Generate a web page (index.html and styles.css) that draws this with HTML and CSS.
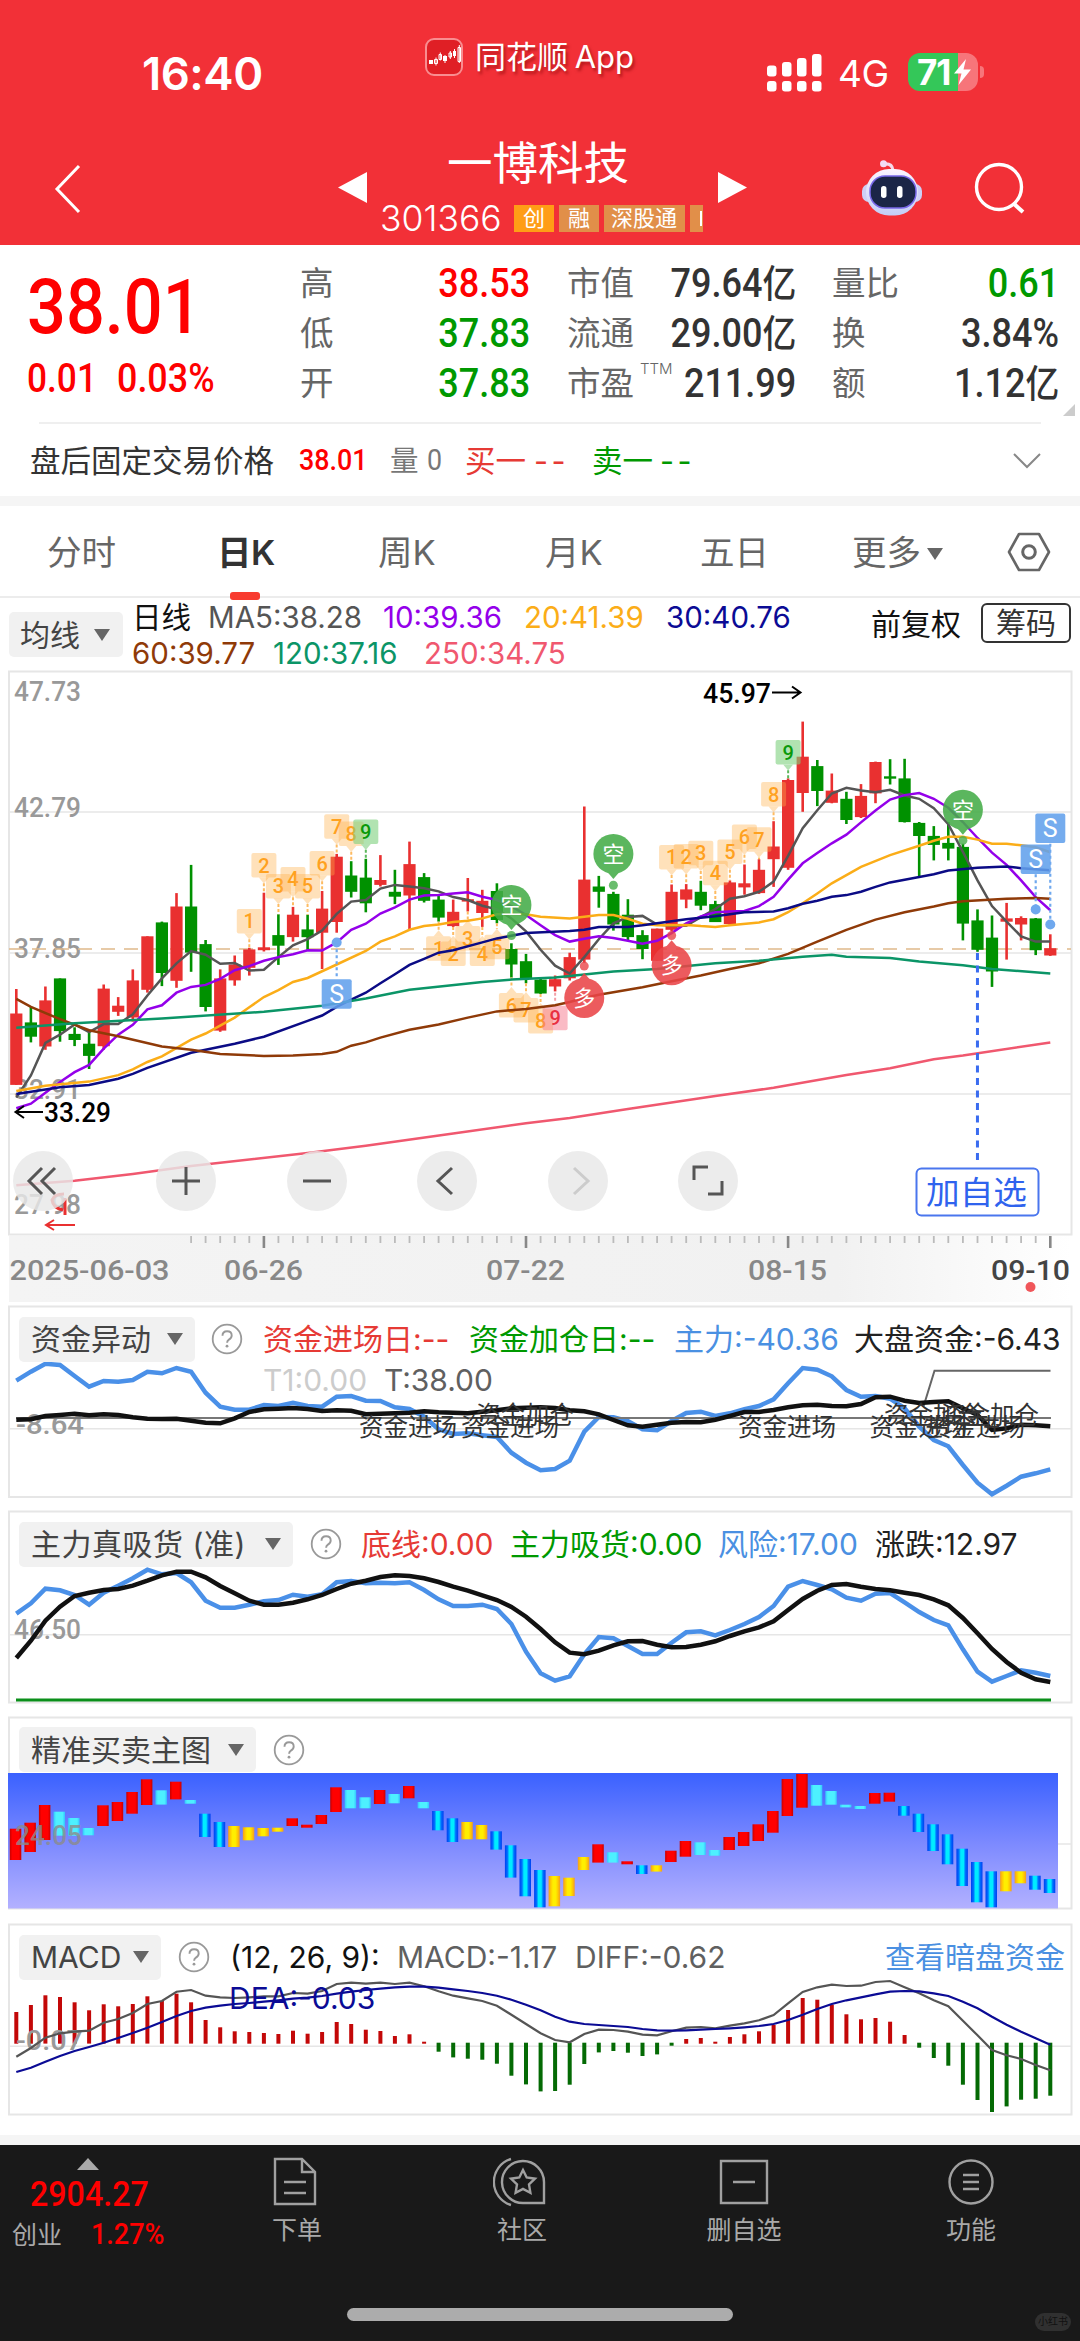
FILE: index.html
```html
<!DOCTYPE html>
<html lang="zh-CN">
<head>
<meta charset="utf-8">
<title>一博科技 301366</title>
<link rel="stylesheet" href="styles.css">
</head>
<body>
<header class="top">
  <div class="status">
    <time class="clock">16:40</time>
    <div class="brand">
      <svg width="38" height="38" viewBox="0 0 38 38"><rect x="1" y="1" width="36" height="36" rx="8" fill="#e01f25" stroke="#f98d90" stroke-width="2"/><path d="M4 22h4v4H4zM18 18h4v5h-4zM28 13h3v5h-3z" fill="#fff"/><path d="M9.500 21.500h3v4h-3zM14 16.500h2.500v5H14zM24 15h2.500v4H24zM33 9.500h2.500v14H33zM11 19.500v8M15.300 14.500v8M20 17v8M25.300 13v8M29.500 11v9M34.300 7v18" fill="none" stroke="#fff" stroke-width="1"/></svg>
      <span>同花顺 App</span>
    </div>
    <div class="radio">
      <svg width="56" height="40" viewBox="0 0 56 40" fill="#fff"><rect x="0" y="12.500" width="9.500" height="11" rx="3"/><rect x="15" y="9" width="9.500" height="14.500" rx="3"/><rect x="30" y="5" width="9.500" height="18.500" rx="3"/><rect x="45" y="1" width="9.500" height="22.500" rx="3"/><rect x="0" y="28" width="9.500" height="10.500" rx="3"/><rect x="15" y="28" width="9.500" height="10.500" rx="3"/><rect x="30" y="28" width="9.500" height="10.500" rx="3"/><rect x="45" y="28" width="9.500" height="10.500" rx="3"/></svg>
      <span class="net">4G</span>
      <div class="battery"><b>71</b><svg width="18" height="26" viewBox="0 0 18 26"><path d="M12 0 0 14.500h7.500L4.500 26 17 10.500H9.500z" fill="#fff"/></svg></div>
      <i class="nub"></i>
    </div>
  </div>
  <nav class="titlebar">
    <svg class="back" width="28" height="50" viewBox="0 0 28 50"><path d="M25 2 3 25l22 23" fill="none" stroke="#fff" stroke-width="3"/></svg>
    <svg class="tri" width="29" height="31" viewBox="0 0 29 31"><path d="M29 0v31L0 15.500z" fill="#fff"/></svg>
    <div class="name">
      <h1>一博科技</h1>
      <div class="code"><span class="num">301366</span><em class="hot">创</em><em>融</em><em>深股通</em><em class="cut"><i></i></em></div>
    </div>
    <svg class="tri" width="29" height="31" viewBox="0 0 29 31"><path d="M0 0v31l29-15.500z" fill="#fff"/></svg>
    <svg class="robot" width="62" height="56" viewBox="0 0 62 56"><defs><linearGradient id="rb" x1="0" y1="0" x2="0" y2="1"><stop offset="0" stop-color="#fbf4ff"/><stop offset="1" stop-color="#c3cdf6"/></linearGradient></defs><path d="M23 4q8-1 9 6" fill="none" stroke="#f6d9ea" stroke-width="3"/><circle cx="22.500" cy="3.800" r="3.500" fill="#f3dcf4"/><rect x="1" y="24" width="60" height="18" rx="7" fill="#cdcff5"/><rect x="5" y="9" width="52" height="46.500" rx="23" fill="url(#rb)"/><rect x="9" y="16" width="46" height="32" rx="15" fill="#1b2547" stroke="#7867e8" stroke-width="1.500"/><rect x="20" y="26" width="5.500" height="12" rx="2.700" fill="#fff"/><rect x="36" y="26" width="5.500" height="12" rx="2.700" fill="#fff"/></svg>
    <svg class="search" width="52" height="52" viewBox="0 0 52 52" fill="none" stroke="#fff" stroke-width="3.400"><circle cx="25" cy="25" r="22.500"/><path d="m39 41 10 9" stroke-width="4"/></svg>
  </nav>
</header>

<section class="quote">
  <div class="last"><strong class="din">38.01</strong><p><span class="din">0.01</span><span class="din">0.03%</span></p></div>
  <dl class="stats">
    <dt>高</dt><dd class="up">38.53</dd><dt>市值</dt><dd>79.64<small>亿</small></dd><dt>量比</dt><dd class="down">0.61</dd>
    <dt>低</dt><dd class="down">37.83</dd><dt>流通</dt><dd>29.00<small>亿</small></dd><dt>换</dt><dd>3.84%</dd>
    <dt>开</dt><dd class="down">37.83</dd><dt>市盈<sup>TTM</sup></dt><dd>211.99</dd><dt>额</dt><dd>1.12<small>亿</small></dd>
  </dl>
  <i class="corner"></i>
</section>
<section class="after">
  <span class="k">盘后固定交易价格</span><span class="din up">38.01</span><span class="g">量</span><span class="din g">0</span><span class="buy">买一</span><span class="buy dash">--</span><span class="down">卖一</span><span class="down dash">--</span>
  <svg width="30" height="18" viewBox="0 0 30 18"><path d="m2 2 13 13L28 2" fill="none" stroke="#888" stroke-width="2"/></svg>
</section>

<nav class="tabs">
  <span>分时</span><span class="on">日K</span><span>周K</span><span>月K</span><span>五日</span><span class="more">更多<i></i></span>
  <svg width="44" height="40" viewBox="0 0 44 40" fill="none" stroke="#666" stroke-width="2.600"><path d="M12 2h20l10 18-10 18H12L2 20z" stroke-linejoin="round"/><circle cx="22" cy="20" r="6.300" stroke-width="3"/></svg>
</nav>

<section class="malegend">
  <button class="pick">均线<i></i></button>
  <div class="malist">
    <p><span class="c0">日线</span><span class="c1">MA5:38.28</span><span class="c2">10:39.36</span><span class="c3">20:41.39</span><span class="c4">30:40.76</span></p>
    <p><span class="c5">60:39.77</span><span class="c6">120:37.16</span><span class="c7">250:34.75</span></p>
  </div>
  <span class="adj">前复权</span><button class="chips">筹码</button>
</section>

<section class="kchart">
  <svg id="k" class="plot" viewBox="0 671 1080 635"></svg>
  <div class="tools">
    <button><svg viewBox="0 0 60 60"><path d="M29 17 16 30l13 13M42 17 29 30l13 13"/></svg></button>
    <button><svg viewBox="0 0 60 60"><path d="M16 30h28M30 16v28"/></svg></button>
    <button><svg viewBox="0 0 60 60"><path d="M16 30h28"/></svg></button>
    <button><svg viewBox="0 0 60 60"><path d="M35 17 21 30l14 13"/></svg></button>
    <button class="off"><svg viewBox="0 0 60 60"><path d="m26 17 14 13-14 13"/></svg></button>
    <button><svg viewBox="0 0 60 60"><path d="M16 29V16h14M44 30v13H30"/></svg></button>
  </div>
</section>

<section class="panel p1">
  <div class="head"><button class="pick">资金异动<i></i></button><svg class="q"><use href="#help"/></svg>
    <span class="buy">资金进场日:--</span><span class="down">资金加仓日:--</span><span class="blue">主力:-40.36</span><span class="blk">大盘资金:-6.43</span></div>
  <div class="sub"><span class="pale">T1:0.00</span><span class="gray">T:38.00</span></div>
  <svg id="f" class="plot" viewBox="0 1306 1080 192"></svg>
</section>
<section class="panel p2">
  <div class="head"><button class="pick">主力真吸货 (准)<i></i></button><svg class="q"><use href="#help"/></svg>
    <span class="buy">底线:0.00</span><span class="down">主力吸货:0.00</span><span class="blue">风险:17.00</span><span class="blk">涨跌:12.97</span></div>
  <svg id="r" class="plot" viewBox="0 1511 1080 192"></svg>
</section>
<section class="panel p3">
  <div class="head"><button class="pick">精准买卖主图<i></i></button><svg class="q"><use href="#help"/></svg></div>
  <svg id="b" class="plot" viewBox="0 1717 1080 192"></svg>
</section>
<section class="panel p4">
  <div class="head"><button class="pick">MACD<i></i></button><svg class="q"><use href="#help"/></svg>
    <span class="ink">(12, 26, 9):</span><span class="gray">MACD:-1.17</span><span class="gray">DIFF:-0.62</span><span class="blue link">查看暗盘资金</span></div>
  <div class="sub"><span class="navy">DEA:-0.03</span></div>
  <svg id="m" class="plot" viewBox="0 1924 1080 192"></svg>
</section>

<footer class="bar">
  <div class="index"><i></i><b class="din">2904.27</b><p><span>创业</span><b class="din">1.27%</b></p></div>
  <div class="item"><svg width="48" height="50" viewBox="0 0 48 50"><path d="M4 2h27l13 13v32H4zM31 2v13h13M13 25h22M13 36h22"/></svg><span>下单</span></div>
  <div class="item"><svg width="54" height="50" viewBox="0 0 54 50"><path d="M51 46H31A21 21 0 1 1 51 25z"/><path d="M18 2a24 24 0 0 0 0 46M30 13l3.700 7.500 8.300 1.200-6 5.800 1.400 8.300-7.400-3.900-7.400 3.900 1.400-8.300-6-5.800 8.300-1.200z"/></svg><span>社区</span></div>
  <div class="item"><svg width="50" height="50" viewBox="0 0 50 50"><path d="M2 4h46v42H2zM14 25h22"/></svg><span>删自选</span></div>
  <div class="item"><svg width="50" height="50" viewBox="0 0 50 50"><circle cx="25" cy="25" r="21.500"/><path d="M17 18h16M17 25h16M17 32h16"/></svg><span>功能</span></div>
  <i class="home"></i><span class="wm">小红书</span>
</footer>

<svg width="0" height="0" class="defs"><symbol id="help" viewBox="0 0 32 32"><circle cx="16" cy="16" r="14.300" fill="none" stroke="#999" stroke-width="1.800"/><path d="M11.500 12.800q0-4.600 4.600-4.600t4.600 4.200q0 2.500-2.800 4.200-1.800 1.100-1.800 3.200" fill="none" stroke="#999" stroke-width="1.900"/><circle cx="16" cy="23.200" r="1.400" fill="#999"/></symbol></svg>
<script src="charts.js"></script>
</body>
</html>
```
FILE: styles.css
```css
*{box-sizing:border-box}
body{margin:0;width:1080px;background:#fff;color:#333;font-family:Inter,"Noto Sans CJK SC",sans-serif;font-size:30px;line-height:1;overflow-x:hidden}
button{font:inherit;color:inherit;border:0;padding:0;margin:0}
h1,p,dl,dd,dt{margin:0;font-weight:400}
i,em{font-style:normal}
span{white-space:nowrap}
.defs{position:absolute}
.din,.stats dd{font-family:Roboto,"Noto Sans CJK SC",sans-serif;font-weight:500}
.up{color:#fe0000}
.down{color:#009900}
.buy{color:#e63a35}
.blue{color:#4a90e2}
.blk{color:#222}
.ink{color:#111}
.gray{color:#606060}
.pale{color:#ccc}
.navy{color:#0b0b95}

.top{height:245px;background:#f23037;color:#fff}
.status{height:120px;display:grid;grid-template-columns:142px 283px 342px 1fr;grid-template-areas:". clock brand radio"}
.clock{grid-area:clock;font-size:45.500px;font-weight:600;letter-spacing:-.5px;padding-top:51px}
.brand{grid-area:brand;display:flex;gap:12px;padding-top:38px;font-size:31px;text-shadow:2px 3px 3px rgba(120,0,0,.5)}
.brand span{line-height:38px;word-spacing:-2px}
.radio{grid-area:radio;display:flex;padding-top:53px}
.net{font-size:37px;line-height:42px;margin-left:15px;width:70px;letter-spacing:-.5px}
.battery{width:70px;height:38px;border-radius:12px;background:linear-gradient(90deg,#34c759 50px,#f7757a 50px);display:flex;align-items:center;padding-left:9px;font-size:35px}
.battery b{width:37px;letter-spacing:-1px}
.nub{width:4px;height:12px;border-radius:0 6px 6px 0;background:#f7757a;margin:13px 0 0 2px}
.titlebar{display:grid;grid-template-columns:284px 42px 338px 143px 113px 1fr;padding-left:54px;height:125px}
.back{margin-top:44px}
.tri{margin-top:52px}
.name{padding-top:19px}
.name h1{font-size:45.500px;line-height:50px;padding-left:67px}
.code{display:flex;gap:5px;margin-top:14px;width:323px;overflow:hidden;height:32px}
.code .num{font-size:35.500px;font-weight:300;line-height:32px;width:130px}
.code em{height:27px;margin-top:2px;background:#e18f49;font-size:22px;line-height:26px;padding:0 9px;flex:none;width:40px}
.code em.hot{background:#ff9d16}
.code em:nth-child(4){width:81px;padding:0 7px}
.code em.cut{width:13px;padding:0}
.cut i{display:block;width:2px;height:15px;background:#fff;margin:6px 0 0 10px}
.robot{margin-top:40px}
.search{margin-top:42px}

.quote{height:177px;display:grid;grid-template-columns:300px 760px 1fr;position:relative}
.last{padding:24px 0 0 27px;color:#fe0000}
.last strong{display:block;font-size:76px;line-height:76px;transform:scaleX(.9);transform-origin:0 50%;white-space:nowrap}
.last p{display:grid;grid-template-columns:90px 1fr;margin-top:13px;font-size:41px;line-height:40px}
.last p span{justify-self:start;transform:scaleX(.875);transform-origin:0 50%}
.last p span:first-child{transform:scaleX(.86)}
.stats{display:grid;grid-template-columns:100px 130px 37px 97px 132px 36px 98px 129px;grid-auto-rows:50px;line-height:50px;padding-top:13px}
.stats dt{font-size:33.500px;color:#666;white-space:nowrap;position:relative}
.stats dt:nth-of-type(3n+2){grid-column:4}
.stats dt:nth-of-type(3n){grid-column:7}
.stats dd{font-size:40.500px;justify-self:end;transform:scaleX(.89);transform-origin:100% 50%;white-space:nowrap}
.stats small{font-size:38px}
.stats sup{position:absolute;left:73px;top:-14px;font-size:15px;font-weight:300}
.corner{position:absolute;right:5px;bottom:6px;border-left:12px solid transparent;border-bottom:12px solid #ccc}
.after{height:74px;border-top:2px solid #efefef;display:grid;grid-template-columns:269px 91px 37px 38px 69px 58px 68px 352px 30px;padding:2px 0 0 30px;align-items:center;font-size:30.500px;border-image:linear-gradient(90deg,transparent 40px,#efefef 40px,#efefef 1040px,transparent 1040px) 1}
.after .din{justify-self:start;transform:scaleX(.91);transform-origin:0 50%;font-size:29.500px}
.after .din.g{font-weight:400}
.after .dash{letter-spacing:3.500px}
.g{color:#777;font-size:28.500px}

.tabs{height:102px;border-top:10px solid #f5f5f5;border-bottom:2px solid #ececec;display:grid;grid-template-columns:47px 170px 161px 167px 155px 152px 155px 1fr;color:#666;font-size:34.500px;line-height:94px}
.tabs span:first-child{grid-column:2}
.tabs .on{color:#333;font-weight:600;position:relative;letter-spacing:-.5px}
.tabs .on::after{content:"";position:absolute;left:13px;bottom:0;width:30px;height:8px;border-radius:3px;background:#f83b2f}
.tabs svg{margin-top:26px}
.more i,.pick i{display:inline-block;border:8px solid transparent;border-top:12px solid #666;border-bottom:0}
.more i{margin:0 0 5px 6px}

.malegend{height:73px;display:grid;grid-template-columns:9px 123px 739px 110px 90px;font-size:30px}
.malegend .pick{grid-column:2}
.pick{display:flex;align-items:center;justify-content:space-between;background:#f1f1f1;border-radius:5px;color:#444;text-align:left;white-space:nowrap}
.malegend .pick{width:114px;height:45px;margin-top:14px;padding:1px 13px 0 11px;font-size:30px}
.malist p{display:grid;line-height:36px;font-size:29.500px;letter-spacing:0}
.malist p:first-child{grid-template-columns:76px 175px 141px 142px 1fr}
.malist p:last-child{grid-template-columns:141px 151px 1fr}
.malist{padding-top:1px}
.c0{color:#111}.c1{color:#555}.c2{color:#9400ea}.c3{color:#fbad18}.c4{color:#0b0b95}.c5{color:#8f3a08}.c6{color:#0b9567}.c7{color:#f0586f}
.adj{color:#111;line-height:52px}
.chips{height:40px;margin-top:5px;border:2px solid #333;border-radius:6px;background:#fff;color:#333;line-height:35px}

.kchart{height:635px;position:relative}
.plot{position:absolute;left:0;top:0;width:1080px;height:100%;overflow:visible;display:block}
.tools{position:absolute;left:13px;top:480px;display:flex;gap:70.500px}
.tools button{width:60px;height:60px;border-radius:50%;background:rgba(232,232,232,.82)}
.tools button:first-child{margin-right:12.500px}
.tools svg{width:60px;height:60px;display:block;fill:none;stroke:#555;stroke-width:3}
.tools .off svg{stroke:#ccc}

.panel{height:192px;margin-bottom:13px;position:relative}
.p2{margin-bottom:14px}.p3{margin-bottom:15px}.p4{margin-bottom:19px}
.panel .head,.panel .sub{position:relative;z-index:1}
.head{display:grid;padding:10px 0 0 19px;align-items:center;line-height:46px}
.pick{height:45px;padding:0 12px 0 12px}
.panel .pick{width:100%}
.q{width:32px;height:32px}
.p1 .head{grid-template-columns:176px 16px 52px 206px 205px 180px 1fr}
.p1 .q,.p2 .q,.p3 .q,.p4 .q{grid-column:3}
.p2 .head{grid-template-columns:274px 17px 51px 149px 208px 157px 1fr}
.p2 .pick{letter-spacing:.5px}
.p3 .head{grid-template-columns:237px 17px 52px 1fr}
.p4 .head{grid-template-columns:142px 17px 52px 167px 178px 310px 1fr}
.sub{display:grid;grid-template-columns:263px 121px 1fr;height:40px;line-height:38px;margin-top:-1px}
.sub span:first-child{grid-column:2}
.p4 .sub{grid-template-columns:229px 1fr}

.bar{height:206px;border-top:10px solid #f5f5f5;background:#191919;color:#a9a9a9;display:grid;grid-template-columns:176px 242px 208px 236px 218px;position:relative;font-size:25px}
.index{padding-top:13px;color:#fe0000}
.index>i{display:block;width:0;margin-left:77px;border:11px solid transparent;border-bottom:12px solid #a9a9a9;border-top:0}
.index>.din{display:block;font-size:35px;line-height:35px;margin:7px 0 0 30px;transform:scaleX(.92);transform-origin:0 50%}
.index p{display:grid;grid-template-columns:79px 1fr;padding-left:12px;line-height:40px;margin-top:2px}
.index p span{color:#a9a9a9;line-height:43px}
.index p .din{font-size:30px;transform:scaleX(.9);transform-origin:0 50%;font-weight:500}
.index>.din{font-weight:500}
.item{display:flex;flex-direction:column;align-items:center;padding-top:12px;gap:11px}
.item svg{fill:none;stroke:#a0a0a0;stroke-width:2.400}
.item:nth-child(2) svg,.item:nth-child(3) svg{margin-right:4px}
.home{position:absolute;left:347px;top:163px;width:386px;height:13px;border-radius:7px;background:#acacac}
.wm{position:absolute;right:9px;bottom:10px;width:36px;height:18px;border-radius:9px;background:#303030;color:#111;font-size:10px;line-height:17px;text-align:center}
svg text{font-family:Roboto,"Noto Sans CJK SC",sans-serif}
```
FILE: charts.js
```js
const STEP = 14.563, X0 = 16.3;
const X = i => X0 + STEP * i;
const n1 = v => Math.round(v * 10) / 10;
const put = (id, s) => document.getElementById(id).insertAdjacentHTML('beforeend', s);
const rect = (x, y, w, h, f, more = '') => `<rect x="${n1(x)}" y="${n1(y)}" width="${n1(w)}" height="${n1(h)}" fill="${f}" ${more}/>`;
const hline = (y, x1 = 9, x2 = 1071, c = '#e6e6e6', w = 1.5) => `<path d="M${x1} ${y}H${x2}" stroke="${c}" stroke-width="${w}"/>`;
const text = (x, y, s, size, fill, w, more = '') => `<text x="${x}" y="${y}" font-size="${size}" fill="${fill}" ${w ? `textLength="${w}" lengthAdjust="spacingAndGlyphs"` : ''} ${more}>${s}</text>`;
const frame = (y, h) => rect(9, y, 1062.500, h, 'none', 'stroke="#e6e6e6" stroke-width="2"');
// pairs: "index:value index:value ..."
const line = (src, Y, color, w) => {
  const pts = src.trim().split(/\s+/).map(p => p.split(':').map(Number)).map(([i, v]) => n1(X(i)) + ',' + n1(Y(v)));
  return `<polyline points="${pts.join(' ')}" fill="none" stroke="${color}" stroke-width="${w}"/>`;
};
// plain list of values, one per day
const series = (src, Y, color, w) => line(src.trim().split(/\s+/).map((v, i) => i + ':' + v).join(' '), Y, color, w);

/* ---------- daily candles ---------- */
const K = v => 660 + v / 2.45;
const RED = '#e93030', GREEN = '#009100';
const candles = `r 866 1041 806 1041,g 888 923 850 937,r 834 947 800 955,g 780 909 780 935,g 916 931 900 946,g 940 970 905 1002,r 805 946 795 955,r 847 862 826 872,r 785 876 758 886,r 677 808 677 815,g 643 767 641 799,r 604 786 571 803,g 604 717 502 764,g 696 850 686 861,r 780 908 758 911,r 746 785 724 798,r 709 754 705 773,r 704 711 570 714,g 674 700 623 747,r 624 679 605 690,g 660 679 624 712,r 609 668 566 757,r 482 642 475 668,g 528 568 493 582,g 533 596 487 618,r 539 551 478 555,g 568 580 514 598,r 500 577 445 661,g 532 590 522 594,g 587 631 578 641,r 617 652 587 654,r 586 592 534 616,r 590 620 563 654,g 566 637 547 645,g 708 746 694 778,g 738 781 720 792,g 783 817 778 818,r 782 800 773 812,r 728 780 717 785,r 538 734 359 742,g 555 568 529 607,g 573 648 568 663,g 624 679 586 688,g 674 708 662 733,r 658 737 658 737,r 568 661 550 665,r 562 587 549 608,g 568 602 541 613,g 598 642 590 642,r 545 647 540 650,r 547 557 501 575,r 514 571 488 573,r 457 488 395 556,r 294 509 290 514,r 237 326 151 372,g 260 321 245 358,r 320 350 278 351,g 340 392 323 402,r 333 385 304 387,r 250 327 249 351,g 285 291 243 305,g 290 397 242 398,g 399 431 397 530,g 431 453 407 491,g 448 462 397 491,g 458 646 450 687,g 638 710 611 715,g 680 763 626 801,r 633 641 595 734,r 632 648 628 687,g 633 711 632 723,r 706 724 672 725`.split(',');

let s = frame(671.500, 563);
s += `<defs><linearGradient id="ax" x1="0" x2="1" y1="0" y2="0"><stop offset="0" stop-color="#f4f4f4"/><stop offset=".78" stop-color="#f1f1f1"/><stop offset="1" stop-color="#fff"/></linearGradient></defs>`;
s += rect(9, 1236, 1062, 66, 'url(#ax)');
[812, 953, 1094].forEach(y => s += hline(y));
[['47.73', 701], ['42.79', 816.500], ['37.85', 957.500], ['32.91', 1098.500], ['27.98', 1214]].forEach(([t, y]) => s += text(14, y, t, 28, '#999', 67, 'font-weight="500"'));
s += `<path d="M9 949H1071" stroke="#e0b98a" stroke-width="1.500" stroke-dasharray="14 9"/>`;
candles.forEach((c, i) => {
  const [k, a, b, h, l] = c.split(' '), f = k === 'r' ? RED : GREEN;
  s += rect(X(i) - 1.300, K(+h), 2.600, (l - h) / 2.450, f) + rect(X(i) - 6.100, K(+a), 12.200, (b - a) / 2.450, f);
});
s += line('0:1287 4:1276 8:1259 12:1240 20:1208 24:1190 30:1160 35:1135 38:1122 42:1100 48:1068 52:1048 57:1017 60:1000 63:978 65:969 71:937', K, '#f0586f', 2.500);

const digit = (i, top, t, f, ink) => {
  const y = K(top);
  return rect(X(i) - 12.500, y, 25, 24.500, f, 'rx="2"') + text(X(i), y + 19.500, t, 20, ink, 0, 'text-anchor="middle" font-weight="500"');
};
const O = 'rgba(255,176,74,.38)', OI = '#ffa11f';
const stem = (i, a, b, c) => `<path d="M${X(i)} ${K(a)}V${K(b)}" stroke="${c}" stroke-width="2" stroke-dasharray="3 2"/>`;
[[1, 16, 610], [2, 17, 473], [3, 18, 524], [4, 19, 507], [5, 20, 524], [6, 21, 468], [7, 22, 378], [8, 23, 396], [1, 45, 453], [2, 46, 451], [3, 47, 443], [4, 48, 492], [5, 49, 440], [6, 50, 403], [7, 51, 410], [8, 52, 299]].forEach(([t, i, y]) => {
  const hi = +candles[i].split(' ')[3];
  s += digit(i, y, t, O, OI) + `<path d="M${X(i) - 5} ${K(y + 60)}h10l-5 6z" fill="${O}"/>` + stem(i, y + 74, Math.max(hi, y + 76), '#fdbb62');
});
[[1, 29, 677], [2, 30, 690], [3, 31, 652], [4, 32, 690], [5, 33, 673], [6, 34, 816], [7, 35, 828], [8, 36, 855]].forEach(([t, i, y]) => {
  const lo = +candles[i].split(' ')[4];
  s += digit(i, y, t, O, OI) + `<path d="M${X(i) - 5} ${K(y)}h10l-5-6z" fill="${O}"/>` + stem(i, Math.min(lo, y - 16), y - 14, '#fdbb62');
});
[[24, 391], [53, 196]].forEach(([i, y]) => s += digit(i, y, 9, 'rgba(125,208,125,.6)', '#0a990a') + `<path d="M${X(i) - 5} ${K(y + 60)}h10l-5 6z" fill="#b4e2b4"/>` + stem(i, y + 74, y + 97, '#5cb85c'));
s += digit(37, 847, 9, 'rgba(245,120,140,.5)', '#e93040') + stem(37, 815, 838, '#f3a0a8');

s += series('1072 1018 938 918 893 912 892 892 868 822 780 743 713 722 744 742 761 759 728 699 684 663 622 592 588 560 551 555 559 567 581 588 602 611 633 665 710 749 768 728 684 645 630 627 648 651 651 630 610 585 579 568 543 480 412 368 327 313 320 324 318 332 340 363 402 470 540 603 641 677 690 690', K, '#555', 2.500);
s += series('1098 1087 1060 1034 1010 992 952 918 894 856 846 815 801 796 781 760 750 737 728 721 711 712 692 661 646 621 606 587 577 576 572 569 580 588 603 625 650 674 690 683 677 681 688 695 688 669 645 628 618 616 615 603 580 538 498 473 449 428 398 369 342 331 326 340 362 397 436 472 502 540 581 613', K, '#9400ea', 2.500);
s += line('0:1056 2:1043 5:1033 7:1017 8:1003 9:985 10:971 12:930 13:915 15:876 16:851 17:826 18:809 19:789 20:779 22:746 24:713 25:690 26:677 27:661 28:652 29:648 30:642 31:639 32:633 33:623 34:622 35:623 36:629 38:633 40:625 41:625 42:634 43:646 44:650 46:649 47:652 48:654 49:650 51:643 52:635 53:618 54:596 55:572 56:547 58:507 60:478 62:455 63:443 64:433 65:433 66:440 67:450 68:450 69:454 70:459 71:471', K, '#fbad18', 2.500);
s += line('0:1063 3:1047 5:1041 7:1026 8:1014 9:999 12:962 15:940 17:923 20:884 21:871 22:850 23:832 24:815 25:792 26:770 27:747 28:732 29:717 30:711 32:692 33:682 35:669 38:664 39:661 40:654 42:654 43:650 46:635 48:628 50:618 52:616 53:608 54:597 55:590 56:580 57:576 58:568 59:556 60:545 62:532 63:525 64:516 66:509 68:506 69:510 71:515', K, '#0b0b85', 2.500);
s += line('0:830 1:850 3:880 5:907 7:922 10:947 12:955 14:965 17:970 19:969 21:965 22:960 23:945 24:937 25:925 27:906 29:893 31:876 33:861 35:855 37:846 38:838 39:828 40:820 43:802 45:787 47:773 49:757 51:743 53:720 55:690 57:661 59:636 61:618 63:604 64:596 65:591 68:585 70:583 71:585', K, '#8f3a08', 2.500);
s += line('0:901 4:890 10:878 17:862 21:847 24:829 27:808 32:789 34:783 37:778 41:763 44:757 48:743 51:737 54:727 56:722 57:727 60:730 62:739 65:748 67:757 71:768', K, '#0b9567', 2.500);

[[34, 600, 675, 0], [41, 475, 552, 0], [65, 367, 442, 0], [39, 828, 750, 1], [45, 748, 675, 1]].forEach(([i, y, d, r]) => {
  const c = r ? '#ea4548' : '#45ad48', x = X(i), cy = K(y), q = r ? -1 : 1;
  s += `<g opacity=".88"><circle cx="${x}" cy="${cy}" r="20" fill="${c}"/><path d="M${x - 6} ${cy + q * 18}L${x} ${cy + q * 25}L${x + 6} ${cy + q * 18}" fill="${c}"/></g>`;
  s += `<circle cx="${x}" cy="${K(d)}" r="4.500" fill="${c}" opacity=".8"/>`;
  s += text(x, cy + 8, r ? '多' : '空', 22, '#fff', 0, 'text-anchor="middle"');
});
[[22, 782, 692, 775], [70, 452, 611, 525], [71, 376, 648, 450]].forEach(([i, y, d, e]) => {
  const x = X(i);
  s += `<path d="M${x} ${K(e)}V${K(d)}" stroke="#6fa8ee" stroke-width="2.200" stroke-dasharray="3 3"/><circle cx="${x}" cy="${K(d)}" r="5" fill="#6fa8ee"/>`;
  s += rect(x - 15, K(y), 30, 29.500, '#62a1ec', 'rx="2" opacity=".88"') + text(x, K(y) + 23.500, 'S', 25, '#fff', 0, 'text-anchor="middle" font-family="Inter"');
});
s += `<path d="M${X(66)} 953V1162" stroke="#3a6cf0" stroke-width="3" stroke-dasharray="7 5.500"/>`;
s += rect(916.500, 1168.500, 122, 47, '#fff', 'rx="5" stroke="#4a76ee" stroke-width="2"') + text(926, 1204, '加自选', 32, '#2f63ee', 101);
s += text(703, 703, '45.97', 28, '#000', 68, 'font-weight="500"') + '<path d="M772 692.500h28m-8-6 8.500 6-8.500 6" fill="none" stroke="#000" stroke-width="2"/>';
s += text(44, 1122, '33.29', 28, '#000', 67, 'font-weight="500"') + '<path d="M43 1112H16m8-6-8.500 6 8.500 6" fill="none" stroke="#000" stroke-width="2"/>';
s += '<path d="M65 1198v17M63 1210q-10-2-11-10q2-6 12-6" fill="none" stroke="#e93030" stroke-width="3"/><path d="M75 1225H47m7-5-8 5 8 5" fill="none" stroke="#e93030" stroke-width="2"/>';
for (let i = 12; i < 72; i++) {
  const big = (i + 1) % 18 === 0;
  s += rect(X(i) - (big ? 1.300 : .9), 1236, big ? 2.600 : 1.800, big ? 12 : 7, big ? '#888' : '#bbb');
}
[['2025-06-03', 9.500, 160, '#888'], ['06-26', 224, 79, '#888'], ['07-22', 486, 79, '#888'], ['08-15', 748, 79, '#888'], ['09-10', 991, 79, '#444']].forEach(([t, x, w, c]) => s += text(x, 1280, t, 28, c, w, 'font-weight="500"'));
s += '<circle cx="1030.500" cy="1287" r="5" fill="#f0565a"/>';
put('k', s);

/* ---------- capital flow ---------- */
const F = v => 1300 + v / 3;
s = frame(1306.500, 190.500) + hline(1428.700);
s += text(16, 1434, '-8.64', 28, '#999', 68, 'font-weight="500"');
s += series('242 215 191 195 228 260 243 245 240 215 220 204 215 278 320 329 329 315 318 308 318 320 290 288 302 303 322 327 350 388 402 400 406 411 458 488 511 507 482 395 351 352 363 388 391 363 339 335 348 340 328 318 298 250 204 209 229 270 290 288 296 325 380 420 439 495 548 583 557 530 520 508', F, '#4a90e8', 4.500);
s += hline(1418, 16, 1051, '#777', 2.200);
s += `<path d="M923.500 1406.500 934.500 1370.700H1050.500" fill="none" stroke="#666" stroke-width="2"/>`;
s += series('359 358 348 345 341 346 343 345 352 356 357 356 362 368 370 355 336 328 326 324 327 333 331 332 343 341 340 338 334 337 338 340 335 331 325 323 322 324 331 334 343 360 376 380 374 368 366 367 359 348 336 336 330 322 316 314 318 319 312 292 290 302 309 306 304 325 345 390 385 374 376 379', F, '#111', 4.500);
[359, 461, 738, 869.500, 927].forEach(x => s += text(x, 1435.500, '资金进场', 24.500, '#333', 98));
[476, 884, 941].forEach(x => s += text(x, 1423.500, '资金加仓', 24.500, '#333', 98));
put('f', s);

/* ---------- absorption ---------- */
s = frame(1511.500, 191) + hline(1634.700);
s += text(14, 1639, '46.50', 28, '#999', 67, 'font-weight="500"');
s += series('941 910 866 871 885 914 878 857 835 809 823 819 847 902 923 923 914 904 900 884 890 883 847 843 850 848 850 847 870 898 918 918 914 927 972 1055 1120 1142 1129 1063 1011 1015 1038 1062 1062 1028 997 994 1006 990 972 951 918 860 843 855 868 893 902 881 879 907 936 960 976 1048 1115 1145 1128 1111 1118 1128', F, '#4a90e8', 4.500);
s += series('1074 1022 962 920 888 878 870 867 857 842 826 815 815 832 858 880 902 914 914 908 898 885 867 851 842 831 826 828 835 846 860 872 886 900 921 950 987 1027 1058 1063 1052 1036 1024 1023 1034 1042 1041 1034 1024 1008 994 982 964 930 897 872 855 852 860 867 871 878 885 898 916 954 1000 1047 1086 1118 1138 1146', F, '#111', 4.500);
s += hline(1700, 16, 1051, '#0b8f1b', 3);
put('r', s);

/* ---------- buy / sell bars ---------- */
const B = v => 1710 + v / 3;
s = `<defs><linearGradient id="sky" x1="0" x2="0" y1="0" y2="1"><stop offset="0" stop-color="#3a61ff"/><stop offset=".5" stop-color="#7a88ff"/><stop offset="1" stop-color="#b3b1ff"/></linearGradient>`;
const skin = { r: ['#c80000', '#ff0000', '#ff0000'], c: ['#35c3ff', '#4df0ff', '#4df0ff'], b: ['#0040f0', '#0070ff', '#00ecff'], y: ['#f39b22', '#ffd000', '#ffee00'] };
for (const k in skin) s += `<linearGradient id="g${k}"><stop offset="0" stop-color="${skin[k][0]}"/><stop offset=".22" stop-color="${skin[k][1]}"/><stop offset=".38" stop-color="${skin[k][2]}"/><stop offset=".62" stop-color="${skin[k][2]}"/><stop offset=".78" stop-color="${skin[k][1]}"/><stop offset="1" stop-color="${skin[k][0]}"/></linearGradient>`;
s += '</defs>' + frame(1717.500, 191) + hline(1844) + rect(8, 1773, 1050, 135.500, 'url(#sky)');
`r 356 450,r 338 426,r 285 390,c 305 377,c 324 377,c 354 376,r 286 348,r 276 333,r 246 311,r 208 285,c 241 284,r 215 268,c 270 281,b 311 381,b 336 411,y 348 411,y 352 391,y 354 379,y 353 365,r 325 348,r 344 353,r 315 342,r 232 306,c 240 295,c 262 295,r 240 282,c 252 280,r 228 265,c 276 295,b 303 361,b 325 396,y 336 388,y 345 388,b 364 419,b 406 503,b 447 559,b 480 592,y 498 589,y 503 558,y 441 480,r 403 458,c 427 458,r 454 463,b 466 492,y 466 485,r 422 456,r 393 440,c 397 435,c 420 437,r 381 420,r 366 408,r 343 393,r 303 368,r 207 318,r 192 293,c 225 287,c 243 284,c 284 292,c 288 297,r 249 281,r 248 275,b 288 317,b 311 366,b 343 423,b 373 463,b 416 528,b 456 577,b 484 592,y 484 544,y 484 520,b 497 539,b 507 549`.split(',').forEach((c, i) => {
  const [k, a, b] = c.split(' ');
  s += rect(X(i) - 6.500, B(+a), 11.500, (b - a) / 3, `url(#g${k})`);
});
s += text(15, 1845, '24.05', 28, '#8c8c8c', 67, 'font-weight="500" opacity=".8"');
put('b', s);

/* ---------- MACD ---------- */
s = frame(1924.500, 190) + hline(2046.300);
'906 885 856 861 877 901 883 889 882 859 873 851 877 930 952 964 966 969 972 962 971 966 936 942 959 963 978 973 995 1025 1042 1046 1049 1061 1097 1123 1144 1143 1124 1062 1027 1023 1028 1038 1033 1007 987 984 995 981 973 964 945 900 864 869 884 913 928 924 935 975 1013 1044 1067 1124 1170 1206 1189 1169 1166 1157'.split(' ').forEach((v, i) => {
  s += v < 1000 ? rect(X(i) - 2, B(+v), 4, (1001 - v) / 3, '#c30808') : rect(X(i) - 2, B(998), 4, (v - 998) / 3, '#046a04');
});
s += text(16, 2050, '-0.07', 28, '#999', 67, 'font-weight="500"');
s += series('1040 1014 983 970 965 962 938 927 909 882 873 845 840 857 862 864 862 859 859 849 851 843 822 818 821 818 822 818 829 844 857 865 873 887 914 942 970 990 997 972 959 960 965 974 976 964 953 951 955 947 940 931 915 880 846 832 824 828 827 816 813 832 850 871 889 932 976 1020 1036 1047 1065 1081', B, '#555', 2.200);
s += series('1086 1073 1055 1038 1023 1011 998 984 969 953 936 918 903 893 887 882 879 875 871 866 863 858 851 845 840 836 832 830 830 833 838 843 849 857 869 884 901 920 935 942 945 948 951 957 961 962 961 959 957 955 952 948 942 930 914 897 882 871 862 853 845 843 844 850 858 875 895 920 944 965 985 1004', B, '#0b0b95', 2.200);
put('m', s);
```
